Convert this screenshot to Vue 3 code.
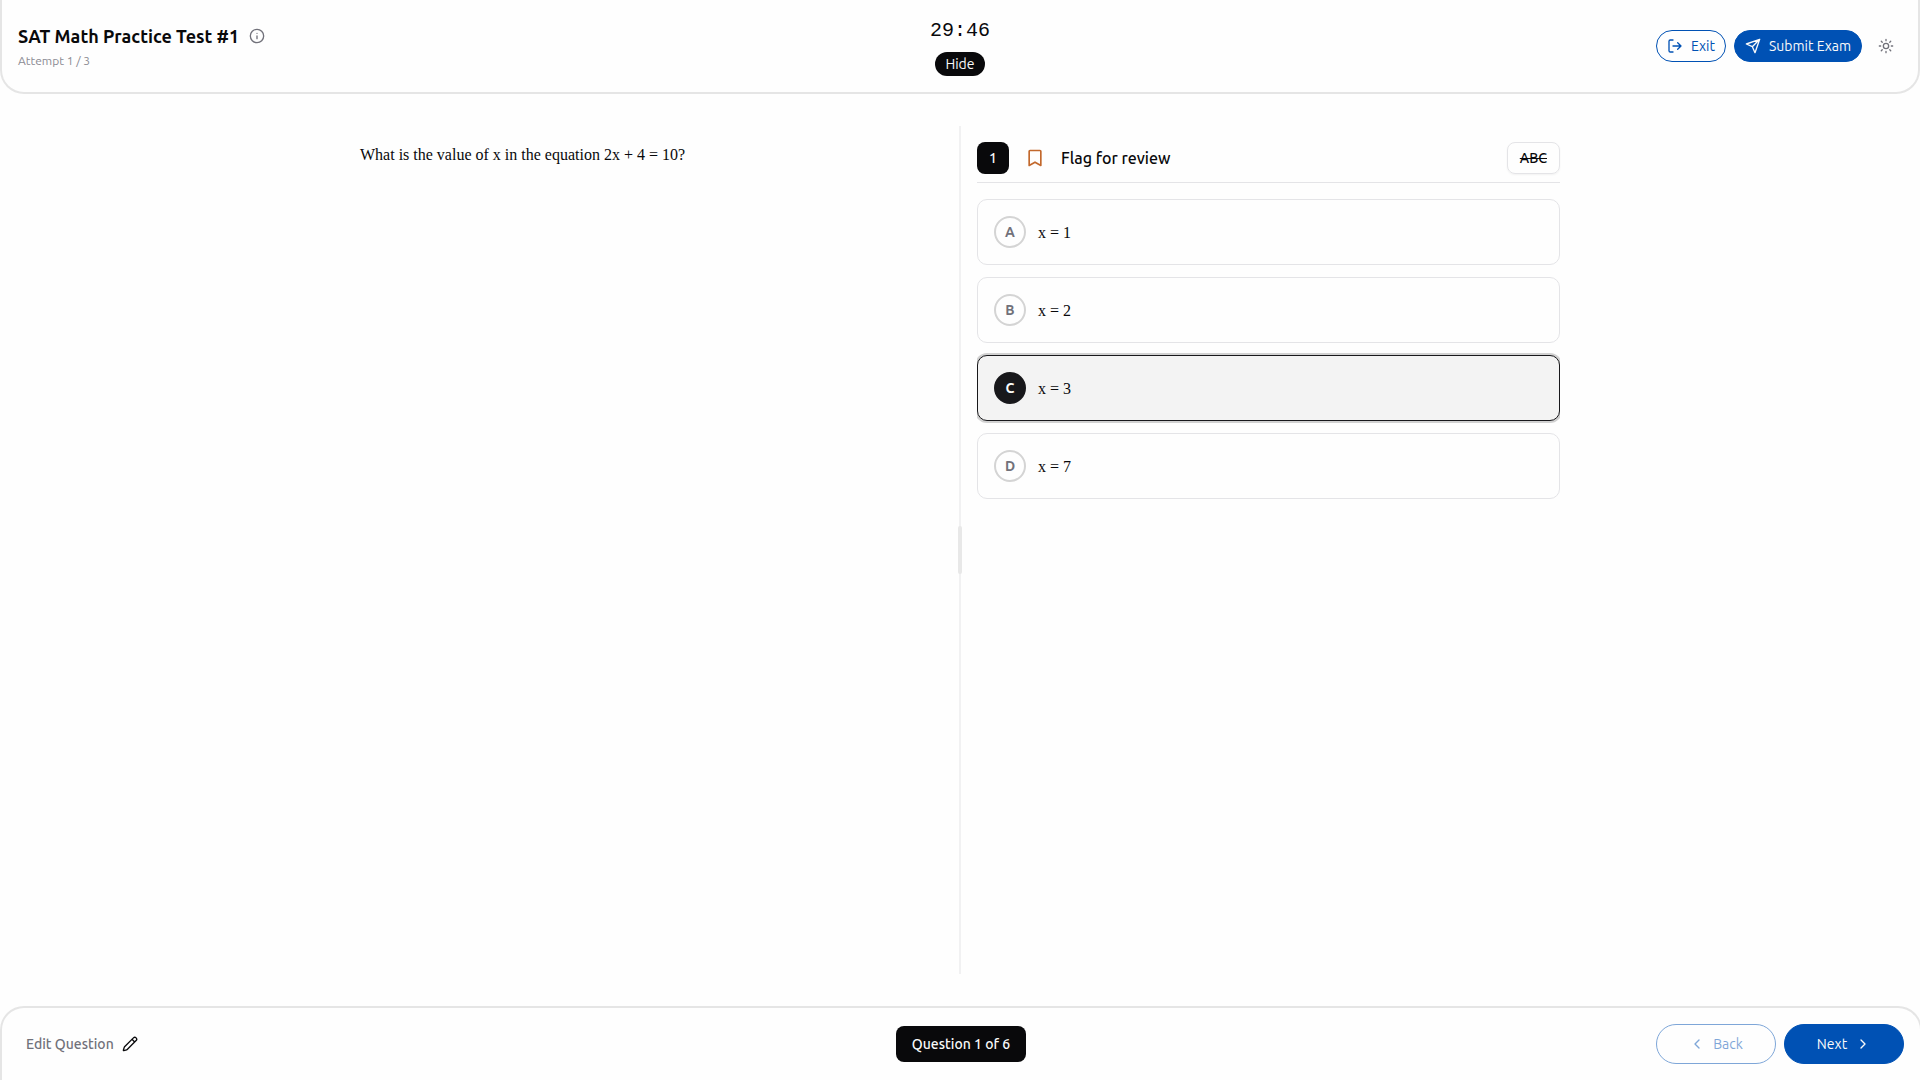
<script setup>
import { ref } from 'vue'

const selected = ref('C')
const timerVisible = ref(true)
const options = [
  { key: 'A', text: 'x = 1' },
  { key: 'B', text: 'x = 2' },
  { key: 'C', text: 'x = 3' },
  { key: 'D', text: 'x = 7' },
]
</script>

<template>
  <div class="exam">
    <header class="topbar">
      <div class="heading">
        <div class="title-row">
          <h1>SAT Math Practice Test #1</h1>
          <button class="plain" type="button" aria-label="Test information">
            <svg class="icon" viewBox="0 0 24 24"><circle cx="12" cy="12" r="10" /><path d="M12 16v-4M12 8h.01" /></svg>
          </button>
        </div>
        <p class="attempt">Attempt 1 / 3</p>
      </div>
      <div class="timer">
        <time v-show="timerVisible">29:46</time>
        <button class="hide" type="button" @click="timerVisible = !timerVisible">Hide</button>
      </div>
      <div class="actions">
        <button class="pill outline" type="button">
          <svg class="icon" viewBox="0 0 24 24"><path d="M9 21H5a2 2 0 0 1-2-2V5a2 2 0 0 1 2-2h4M16 17l5-5-5-5M21 12H9" /></svg>
          Exit
        </button>
        <button class="pill solid" type="button">
          <svg class="icon" viewBox="0 0 24 24"><path d="m22 2-7 20-4-9-9-4ZM22 2 11 13" /></svg>
          Submit Exam
        </button>
        <button class="plain theme" type="button" aria-label="Toggle theme">
          <svg class="icon" viewBox="0 0 24 24"><circle cx="12" cy="12" r="4" /><path d="M12 2v2M12 20v2M4.93 4.93l1.41 1.41M17.66 17.66l1.41 1.41M2 12h2M20 12h2M6.34 17.66l-1.41 1.41M19.07 4.93l-1.41 1.41" /></svg>
        </button>
      </div>
    </header>

    <main class="workspace">
      <section class="prompt">
        <p>What is the value of x in the equation 2x + 4 = 10?</p>
      </section>
      <div class="divider" role="separator" aria-orientation="vertical"><span class="grip"></span></div>
      <section class="answers">
        <div class="toolbar">
          <span class="number">1</span>
          <button class="flag" type="button">
            <svg class="icon bookmark" viewBox="0 0 24 24"><path d="m19 21-7-4-7 4V4a1 1 0 0 1 1-1h12a1 1 0 0 1 1 1z" /></svg>
            Flag for review
          </button>
          <button class="strike" type="button">ABC</button>
        </div>
        <div class="options" role="radiogroup" aria-label="Answer choices">
          <label v-for="o in options" :key="o.key" class="option" :class="{ chosen: selected === o.key }">
            <input v-model="selected" class="radio" type="radio" name="answer" :value="o.key" />
            <span class="letter">{{ o.key }}</span>
            <span class="choice">{{ o.text }}</span>
          </label>
        </div>
      </section>
    </main>

    <footer class="bottombar">
      <button class="edit" type="button">
        Edit Question
        <svg class="icon" viewBox="0 0 24 24"><path d="M21.17 6.81a1 1 0 0 0-3.98-3.98L3.84 16.17a2 2 0 0 0-.5.83l-1.32 4.35a.5.5 0 0 0 .62.62l4.35-1.32a2 2 0 0 0 .83-.5zM15 5l4 4" /></svg>
      </button>
      <button class="position" type="button">Question 1 of 6</button>
      <nav class="pager">
        <button class="pill outline large" type="button" disabled>
          <svg class="icon" viewBox="0 0 24 24"><path d="m15 18-6-6 6-6" /></svg>
          Back
        </button>
        <button class="pill solid large" type="button">
          Next
          <svg class="icon" viewBox="0 0 24 24"><path d="m9 18 6-6-6-6" /></svg>
        </button>
      </nav>
    </footer>
  </div>
</template>

<style>
body {
  margin: 0;
  background: #fefefe;
}
</style>

<style scoped>
.exam {
  display: flex;
  flex-direction: column;
  min-height: 100vh;
  overflow: hidden;
  color: #09090b;
  font-family: Ubuntu, "Noto Sans", sans-serif;
  font-size: 14px;
  line-height: 20px;
}
.exam * {
  box-sizing: border-box;
}
h1,
p {
  margin: 0;
}
button {
  display: inline-flex;
  align-items: center;
  justify-content: center;
  margin: 0;
  padding: 0;
  border: 0;
  background: none;
  color: inherit;
  font: inherit;
  white-space: nowrap;
}
.icon {
  flex: none;
  width: 16px;
  height: 16px;
  fill: none;
  stroke: currentColor;
  stroke-width: 2;
  stroke-linecap: round;
  stroke-linejoin: round;
}
.topbar {
  display: grid;
  grid-template-columns: 1fr auto 1fr;
  align-items: center;
  padding: 16px;
  border: 2px solid #e5e5e5;
  border-top: 0;
  border-radius: 0 0 24px 24px;
}
.heading {
  align-self: start;
  padding-top: 6px;
}
.title-row {
  display: flex;
  align-items: center;
  gap: 10px;
}
h1 {
  font-size: 18px;
  font-weight: 600;
  line-height: 28px;
}
.plain {
  color: #71717a;
}
.attempt {
  margin-top: 2px;
  color: #8b8b93;
  font-size: 12px;
  line-height: 18px;
}
.timer {
  display: flex;
  flex-direction: column;
  align-items: center;
  gap: 6px;
}
.timer time {
  font-family: "Liberation Mono", monospace;
  font-size: 20px;
  line-height: 30px;
}
.hide {
  height: 24px;
  padding: 0 10px;
  border-radius: 12px;
  background: #09090b;
  color: #fafafa;
}
.actions {
  display: flex;
  justify-content: flex-end;
  align-items: center;
  gap: 8px;
}
.pill {
  gap: 8px;
  height: 32px;
  padding: 0 10px;
  border: 1px solid #0051b4;
  border-radius: 20px;
}
.outline {
  color: #0051b4;
}
.outline:disabled {
  opacity: 0.5;
}
.solid {
  background: #0051b4;
  color: #fafafa;
}
.large {
  width: 120px;
  height: 40px;
}
.theme {
  width: 32px;
  height: 32px;
}
.workspace {
  display: flex;
  flex: 1;
  width: 100%;
  max-width: 1200px;
  margin: 0 auto;
  padding: 32px 0;
}
.prompt,
.answers {
  flex: 1;
  min-width: 0;
}
.prompt {
  padding: 16px 16px 16px 0;
  font-family: "Liberation Serif", serif;
  font-size: 16px;
  line-height: 26px;
}
.divider {
  position: relative;
  width: 2px;
  background: #f1f1f2;
}
.grip {
  position: absolute;
  top: calc(50% - 24px);
  left: -1px;
  width: 4px;
  height: 48px;
  border-radius: 2px;
  background: #e8e8e8;
}
.answers {
  margin-left: 16px;
  padding-top: 16px;
  flex-basis: -16px;
}
.toolbar {
  display: flex;
  align-items: center;
  padding-bottom: 8px;
  border-bottom: 1px solid #e4e4e7;
}
.number {
  display: flex;
  align-items: center;
  justify-content: center;
  width: 32px;
  height: 32px;
  border-radius: 8px;
  background: #09090b;
  color: #fafafa;
  font-weight: 500;
}
.flag {
  gap: 16px;
  margin-left: 16px;
  font-size: 16px;
  font-weight: 500;
  line-height: 24px;
}
.bookmark {
  width: 20px;
  height: 20px;
  color: #c2682c;
}
.strike {
  height: 32px;
  margin-left: auto;
  padding: 0 12px;
  border: 1px solid #e4e4e7;
  border-radius: 8px;
  box-shadow: 0 1px 2px rgba(0, 0, 0, 0.05);
  font-weight: 500;
  text-decoration: line-through;
}
.options {
  display: flex;
  flex-direction: column;
  gap: 12px;
  padding: 16px 0;
  overflow: hidden;
}
.option {
  display: flex;
  align-items: center;
  gap: 12px;
  padding: 16px;
  border: 1px solid #e4e4e7;
  border-radius: 10px;
}
.radio {
  position: absolute;
  opacity: 0;
}
.letter {
  display: flex;
  align-items: center;
  justify-content: center;
  width: 32px;
  height: 32px;
  border: 2px solid #d4d4d4;
  border-radius: 50%;
  color: #71717a;
  font-weight: 600;
}
.choice {
  padding-top: 2px;
  font-family: "Liberation Serif", serif;
  font-size: 16px;
  line-height: 24px;
}
.chosen {
  border-color: #18181b;
  background: #f3f3f3;
  box-shadow: 0 0 0 2px #d1d1d1;
}
.chosen .letter {
  border-color: #18181b;
  background: #18181b;
  color: #fafafa;
}
.bottombar {
  display: grid;
  grid-template-columns: 1fr auto 1fr;
  align-items: center;
  margin-right: -2px;
  padding: 16px;
  border: 2px solid #e5e5e5;
  border-bottom: 0;
  border-radius: 24px 24px 0 0;
}
.edit {
  gap: 8px;
  justify-self: start;
  padding: 0 8px;
  color: #71717a;
  font-weight: 500;
}
.edit .icon {
  color: #09090b;
}
.position {
  height: 36px;
  padding: 0 16px;
  border-radius: 8px;
  background: #09090b;
  color: #fafafa;
  font-weight: 500;
}
.pager {
  display: flex;
  justify-content: flex-end;
  gap: 8px;
}
</style>
